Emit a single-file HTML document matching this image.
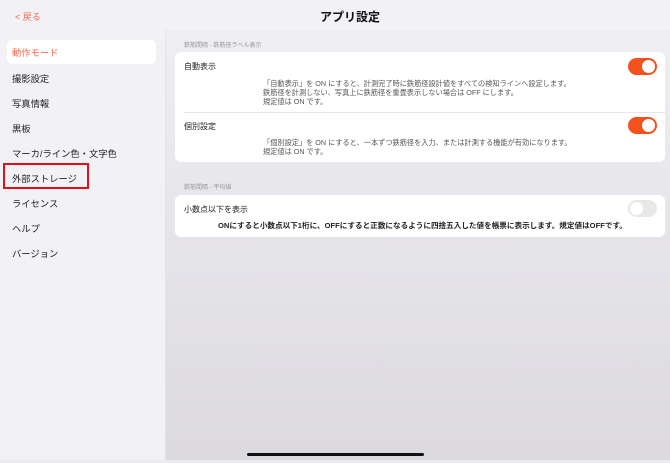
<!DOCTYPE html><html><head><meta charset="utf-8"><style>
body{margin:0;width:670px;height:463px;overflow:hidden;font-family:"Liberation Sans","Noto Sans CJK JP",sans-serif;position:relative;background:#f2f1f6}
.a{position:absolute;white-space:nowrap}
#main{position:absolute;left:165px;top:30px;width:505px;height:430px;background:linear-gradient(#efeef3,#dcdadf);border-left:1px solid #e4e3e8}
.side{font-size:9.3px;color:#222;left:12px}
.card{position:absolute;background:#fff;border-radius:6px;left:175px;width:490px}
.tg{position:absolute;width:29px;height:17px;border-radius:9px;background:#f4511e}
.tg::after{content:"";position:absolute;right:2px;top:2px;width:13px;height:13px;border-radius:50%;background:#fff}
.off{background:#e8e8ea}.off::after{left:2px;right:auto}
.d{font-size:7.2px;color:#555;line-height:9px}
.h{font-size:6px;color:#999}
</style></head><body>
<div id="main"></div>
<div class="a" style="left:15px;top:10px;font-size:9px;color:#f26a4f">&lt; 戻る</div>
<div class="a" style="left:320px;top:8px;font-size:12px;font-weight:bold;color:#111">アプリ設定</div>
<div class="a" style="left:7px;top:40px;width:149px;height:24px;background:#fff;border-radius:5px"></div>
<div class="a side" style="top:45px;color:#f26a4f">動作モード</div>
<div class="a side" style="top:71px">撮影設定</div>
<div class="a side" style="top:96px">写真情報</div>
<div class="a side" style="top:121px">黒板</div>
<div class="a side" style="top:146px">マーカ/ライン色・文字色</div>
<div class="a side" style="top:171px">外部ストレージ</div>
<div class="a" style="left:3px;top:163px;width:82px;height:22px;border:2px solid #e0101a"></div>
<div class="a side" style="top:196px">ライセンス</div>
<div class="a side" style="top:221px">ヘルプ</div>
<div class="a side" style="top:246px">バージョン</div>
<div class="a h" style="left:184px;top:40px">鉄筋間隔 - 鉄筋径ラベル表示</div>
<div class="card" style="top:52px;height:110px"></div>
<div class="a" style="left:184px;top:61px;font-size:8px;color:#222">自動表示</div>
<div class="tg" style="left:628px;top:58px"></div>
<div class="a d" style="left:263px;top:79px">「自動表示」を ON にすると、計測完了時に鉄筋径設計値をすべての検知ラインへ設定します。<br>鉄筋径を計測しない、写真上に鉄筋径を重畳表示しない場合は OFF にします。<br>規定値は ON です。</div>
<div class="a" style="left:184px;top:112px;width:481px;height:1px;background:#e6e6e8"></div>
<div class="a" style="left:184px;top:121px;font-size:8px;color:#222">個別設定</div>
<div class="tg" style="left:628px;top:117px"></div>
<div class="a d" style="left:263px;top:138px">「個別設定」を ON にすると、一本ずつ鉄筋径を入力、または計測する機能が有効になります。<br>規定値は ON です。</div>
<div class="a h" style="left:184px;top:182px">鉄筋間隔 - 平均値</div>
<div class="card" style="top:195px;height:42px"></div>
<div class="a" style="left:184px;top:204px;font-size:8px;color:#222">小数点以下を表示</div>
<div class="tg off" style="left:628px;top:200px"></div>
<div class="a" style="left:218px;top:220px;font-size:7.6px;color:#222;font-weight:bold">ONにすると小数点以下1桁に、OFFにすると正数になるように四捨五入した値を帳票に表示します。規定値はOFFです。</div>
<div class="a" style="left:247px;top:453px;width:177px;height:3px;border-radius:2px;background:#111"></div>
<div class="a" style="left:0;top:460px;width:670px;height:3px;background:#ececf0"></div>
</body></html>
